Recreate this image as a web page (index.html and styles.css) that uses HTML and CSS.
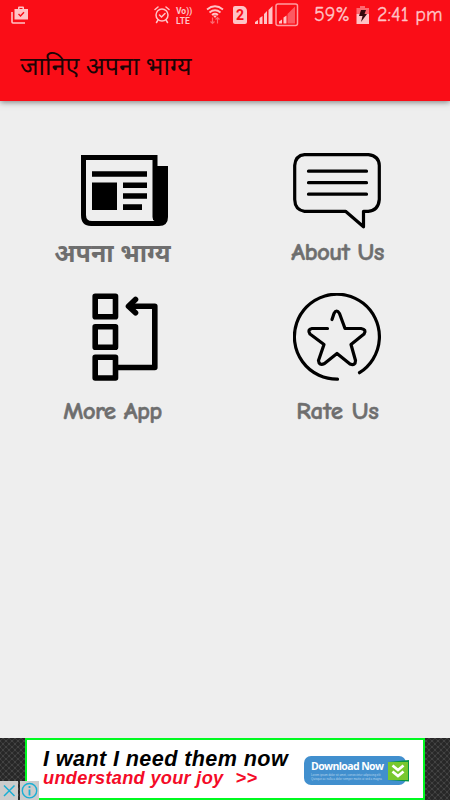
FILE: index.html
```
<!DOCTYPE html>
<html lang="hi">
<head>
  <meta charset="utf-8" />
  <title>जानिए अपना भाग्य</title>
  <meta name="viewport" content="width=device-width, initial-scale=1.0" />
  <link rel="stylesheet" href="styles.css">
</head>

<body>
  <div class="app">
    <header class="header">
      <div class="status-bar">
        <svg class="work" width="18" height="18" viewBox="0 0 18 18">
          <path d="M1 6v10q0 1 1 1h12" fill="none" stroke="#ffc3c6" stroke-width="1.6" />
          <path d="M7 3V1.5Q7 .5 8 .5h4q1 0 1 1V3h4v10.500H3.500V3zM8.500 3h3V1.900h-3z" fill="#ffc3c6" />
          <path d="M7.500 8l2 2 3.500-3.700" fill="none" stroke="#fa0d17" stroke-width="1.4" />
        </svg>
        <svg class="alarm" width="16" height="18" viewBox="0 0 16 18">
          <g fill="none" stroke="#ffc3c6" stroke-width="1.5" stroke-linecap="round">
            <circle cx="8" cy="9" r="6" />
            <path d="M1 3.500L4 1M15 3.500L12 1M4 14l-1.500 2.500M12 14l1.500 2.500M5.500 9l2 2L11 7.500" />
          </g>
        </svg>
        <div class="volte"><span>Vo))</span><span>LTE</span></div>
        <svg class="wifi" width="18" height="20" viewBox="0 0 18 20">
          <path d="M1 4.500q8-6.500 16 0M3.500 7.500q5.500-4.500 11 0M6 10q3-2.500 6 0" fill="none" stroke="#ffc3c6" stroke-width="1.8" />
          <path d="M7 10.500h4L9 13z" fill="#ffc3c6" />
          <path d="M6.500 12.500v6M4.500 16.500l2 2 2-2M11.500 18.500v-6M9.500 14.500l2-2 2 2" fill="none" stroke="#fd6870" stroke-width="1.200" />
        </svg>
        <div class="sim">2</div>
        <svg class="signal" width="18" height="18" viewBox="0 0 18 18">
          <path d="M0 18v-2l3-2v4zM4.500 18v-6l3-2v8zM9 18V8l3-3v13zM13.500 18V4l4-4v18z" fill="#ffc3c6" />
        </svg>
        <svg class="signal-box" width="24" height="24" viewBox="0 0 24 24">
          <rect x="1" y="1" width="21.500" height="21.500" rx="2" fill="none" stroke="#ff9ca1" stroke-width="1.500" />
          <path d="M12.500 20.500v-9.500L20 3.500v17z" fill="#fd5962" />
          <path d="M4 20.500v-2l3-2v4zM8.500 20.500v-6l3-2v8z" fill="#ffc3c6" />
        </svg>
        <span class="percent">59%</span>
        <svg class="battery" width="14" height="18" viewBox="0 0 14 18">
          <path d="M4 0h5v2h4v6H.5V2H4z" fill="#fd6870" />
          <path d="M.5 8H13v10H.5z" fill="#ffc3c6" />
          <path d="M5 4h5L8.500 8H11l-6 8 1.500-6H3z" fill="#35080c" />
        </svg>
        <span class="clock">2:41 pm</span>
      </div>
      <h1 class="title">जानिए अपना भाग्य</h1>
    </header>

    <main class="menu">
      <a class="menu-item shifted">
        <svg class="icon" width="88" height="88" viewBox="0 0 88 88">
          <path d="M0 2h76.500v11H87v51q0 9-9 9H10Q0 73 0 62z" fill="#000" />
          <path d="M5 7h66.500v57q0 3 2 4H11q-6 0-6-6z" fill="#eee" />
          <path d="M11 18.200h55v5.500H11zM11 29.500h25v27.500H11zM42 29.500h24V35H42zM42 40.300h24v5.500H42zM42 51.300h19V57H42z" fill="#000" />
        </svg>
        <span class="label label-hindi">अपना भाग्य</span>
      </a>
      <a class="menu-item">
        <svg class="icon" width="88" height="88" viewBox="0 0 88 88">
          <g fill="none" stroke="#000" stroke-width="3.200" stroke-linecap="round" stroke-linejoin="round">
            <path d="M11.500 1.700h64q10.500 1.300 10.800 10.800v34q-1 11-11 11.800h-4.800v15.500L52.500 58.300h-41Q2 57 1.700 46.500v-34Q2.500 2.500 11.500 1.700z" />
            <path d="M15.500 18.200h58M15.500 29.700h58M15.500 41.200h58" />
          </g>
        </svg>
        <span class="label">About Us</span>
      </a>
      <a class="menu-item shifted">
        <svg class="icon" width="88" height="88" viewBox="0 0 88 88">
          <g fill="none" stroke="#000" stroke-width="5.600" stroke-linejoin="round" stroke-linecap="round">
            <path d="M14.200 3.200h20.300v20.500H14.200zM14.200 33.700h20.300v20.500H14.200zM14.200 64.200h20.300V85H14.200z" />
            <path d="M37 74.500h36.800V13.200H50" />
            <path d="M54.500 6.500L47.500 13.200l7 6.600" />
          </g>
        </svg>
        <span class="label label-more">More App</span>
      </a>
      <a class="menu-item">
        <svg class="icon" width="88" height="88" viewBox="0 0 88 88">
          <g fill="none" stroke="#000" stroke-width="3.200" stroke-linecap="round" stroke-linejoin="round">
            <path d="M44.500 86.200A42.500 42.500 0 1 1 66.500 79.700" />
            <path d="M39 26.500l2-6q2.500-5 5.500 0l5.500 15h16q6 1 3 5.500L58 51.500l4.500 16q0 5.500-5.500 3.500L44 60.500 31.500 70.500q-5.500 2.500-6-3L31 51.500 17 41q-3-4.500 2-5.500h15.500" />
          </g>
        </svg>
        <span class="label label-rate">Rate Us</span>
      </a>
    </main>

    <footer class="ad">
      <div class="ad-banner">
        <div class="ad-text">
          <div class="ad-line">I want I need them now</div>
          <div class="ad-line red"><span>understand your joy</span><span class="more">&gt;&gt;</span></div>
        </div>
        <div class="download">
          <div class="download-text">
            <b>Download Now</b>
            <small>Lorem ipsum dolor sit amet, consectetur adipiscing elit<br>Quisque ac nulla a dolor semper mattis ut sed a magna</small>
          </div>
          <svg class="arrows" width="21" height="22" viewBox="0 0 21 22">
            <path d="M0 2L21 0v21.500L0 20z" fill="#079447" />
            <path d="M0 2h20v18H0z" fill="#78c82f" />
            <path d="M4.500 5.500l5.500 4.500 5.500-4.500M4.500 11.500L10 16l5.500-4.500" fill="none" stroke="#fff" stroke-width="2.800" />
          </svg>
        </div>
      </div>
      <div class="ad-choices">
        <svg width="18" height="19" viewBox="0 0 18 19">
          <path d="M4 4.500l10.500 10.500M14.500 4.500L4 15" stroke="#1aaed4" stroke-width="1.500" />
        </svg>
        <svg width="19" height="19" viewBox="0 0 19 19">
          <circle cx="9.500" cy="9.700" r="7.200" fill="none" stroke="#1aaed4" stroke-width="1.400" />
          <path d="M9.500 5v2M9.500 8.500v6" stroke="#1aaed4" stroke-width="1.800" />
        </svg>
      </div>
    </footer>
  </div>
</body>
</html>
```
FILE: styles.css
```
html, body {
  margin: 0;
  padding: 0;
  height: 100%;
  overflow: hidden;
  font-family: "Noto Sans", sans-serif;
  background-color: #eee;
}

.app {
  display: flex;
  flex-direction: column;
  height: 100vh;
}

.header {
  height: 101px;
  flex-shrink: 0;
  background-color: #fa0d17;
  box-shadow: 0 1px 6px rgba(0, 0, 0, 0.5);
}

.status-bar {
  display: flex;
  align-items: center;
  box-sizing: border-box;
  height: 30px;
  padding-left: 11px;
  color: #ffc3c6;
  white-space: nowrap;
}

.status-bar > * {
  flex-shrink: 0;
}

.alarm {
  margin-left: 125px;
}

.volte {
  display: flex;
  flex-direction: column;
  width: 18px;
  margin: 1px 0 0 6px;
  font: bold 8.500px/10px Roboto, sans-serif;
}

.wifi {
  margin-left: 12px;
}

.sim {
  width: 14px;
  height: 18px;
  margin-left: 9px;
  border-radius: 2px 5px 2px 2px;
  background-color: #ffc3c6;
  color: #fa0d17;
  font: bold 14px/18px Roboto, sans-serif;
  text-align: center;
}

.signal {
  margin-left: 8px;
}

.signal-box {
  margin-left: 2px;
}

.percent,
.clock {
  font-family: "Comic Neue", "Comic Sans MS", "Open Sans", sans-serif;
  font-size: 20px;
  line-height: 32px;
  -webkit-text-stroke: 0.3px #ffc3c6;
}

.percent {
  width: 37px;
  margin-left: 15px;
}

.battery {
  margin-left: 5px;
}

.clock {
  margin-left: 7px;
}

.title {
  margin: 0;
  padding-left: 20px;
  color: #1c0405;
  font-size: 25px;
  font-weight: 400;
  line-height: 70px;
  white-space: nowrap;
}

.menu {
  flex: 1;
  display: grid;
  grid-template-columns: 225px 225px;
  grid-template-rows: 140px 160px;
  padding-top: 52px;
}

.menu-item {
  display: flex;
  flex-direction: column;
  align-items: center;
  color: #6e6e6e;
}

.icon {
  display: block;
  flex-shrink: 0;
  margin-right: 1px;
}

.shifted .icon {
  margin-right: 0;
  margin-left: 24px;
}

.label {
  margin-top: -6px;
  font: 600 25px/34px "Comic Neue", "Comic Sans MS", "Open Sans", sans-serif;
  letter-spacing: -0.6px;
  white-space: nowrap;
  -webkit-text-stroke: 0.5px #6e6e6e;
}

.label-hindi {
  font-family: "Noto Sans", sans-serif;
  font-weight: 700;
  letter-spacing: 0;
  -webkit-text-stroke: 0;
}

.label-more,
.label-rate {
  margin-top: 13px;
}

.label-rate {
  letter-spacing: -0.1px;
}

.ad {
  position: relative;
  display: flex;
  justify-content: center;
  height: 62px;
  flex-shrink: 0;
  background-color: #333;
  background-image: radial-gradient(circle, #272727 1.5px, transparent 2px), radial-gradient(circle, #272727 1.5px, #424242 2.5px);
  background-position: 0 0, 3px 3px;
  background-size: 6px 6px;
}

.ad-banner {
  display: flex;
  align-items: flex-start;
  box-sizing: border-box;
  width: 400px;
  border: 2px solid #00fa20;
  background-color: #fff;
  font-family: "Liberation Sans", sans-serif;
}

.ad-text {
  width: 260px;
  flex-shrink: 0;
  padding: 8px 0 0 16px;
}

.ad-line {
  color: #000;
  font-size: 21.600px;
  font-style: italic;
  font-weight: 700;
  line-height: 22px;
  letter-spacing: 0.4px;
  white-space: nowrap;
}

.ad-line.red {
  display: flex;
  color: #f40b27;
  font-size: 18.200px;
  line-height: 17px;
  letter-spacing: 0.3px;
}

.more {
  margin-left: 12px;
}

.download {
  display: flex;
  align-items: center;
  box-sizing: border-box;
  width: 102px;
  height: 29px;
  margin: 16px 0 0 1px;
  padding-left: 7px;
  border-radius: 7px;
  background-color: #418fce;
  color: #fff;
}

.download-text {
  display: flex;
  flex-direction: column;
  width: 77px;
  flex-shrink: 0;
  white-space: nowrap;
}

.download-text b {
  font: 700 10.500px/13px "Open Sans", sans-serif;
  letter-spacing: -0.6px;
}

.download-text small {
  color: #b5d5ec;
  font-size: 2.900px;
  line-height: 4px;
}

.arrows {
  flex-shrink: 0;
}

.ad-choices {
  position: absolute;
  left: 0;
  bottom: 0;
  display: flex;
  gap: 2px;
}

.ad-choices svg {
  background-color: #ccc;
}
```
